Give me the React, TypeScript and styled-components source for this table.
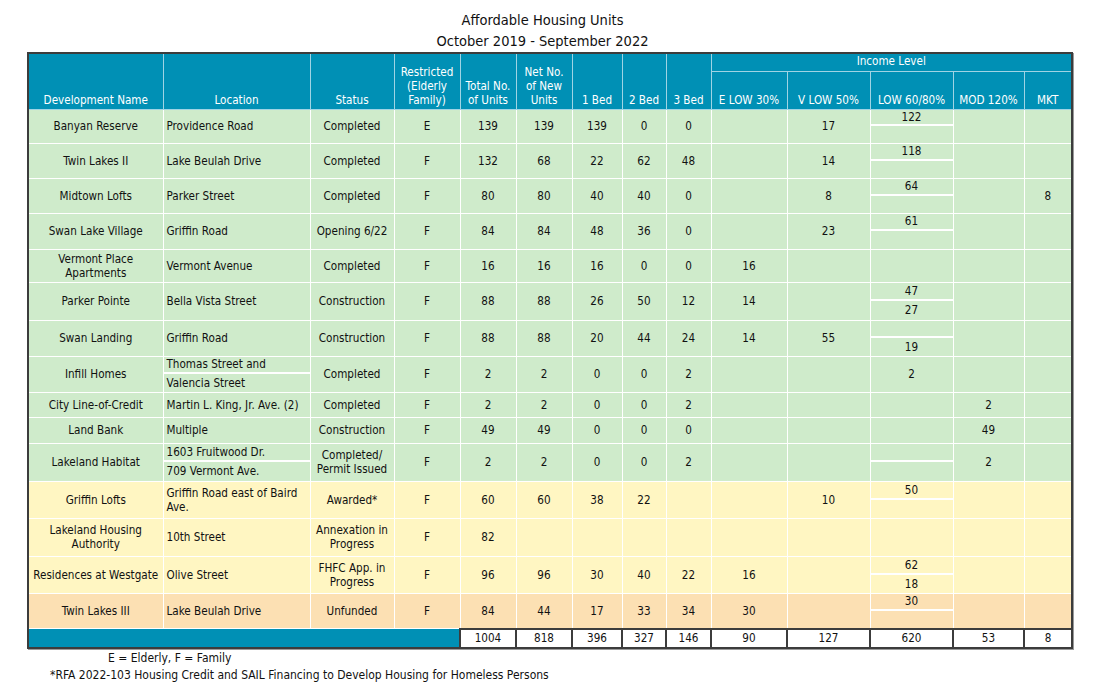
import React from 'react';
import styled, { createGlobalStyle } from 'styled-components';

type Tone = 'green' | 'yellow' | 'orange';

const tones: Record<Tone, string> = {
  green: '#cfebcb',
  yellow: '#fff6c2',
  orange: '#fce0b3',
};

const GlobalStyle = createGlobalStyle`
  body {
    margin: 0;
    background: #fff;
    font-family: "DejaVu Sans Condensed", "DejaVu Sans", sans-serif;
    font-stretch: condensed;
    color: #111;
  }
`;

const Page = styled.div`
  width: 1101px;
  height: 695px;
  padding-left: 27px;
  box-sizing: border-box;
`;

const Title = styled.div`
  width: 1045px;
  padding-top: 10px;
  text-align: center;
  font-size: 14.5px;
  line-height: 21px;
  padding-right: 14px;
  box-sizing: border-box;
`;

const Table = styled.table`
  border-collapse: collapse;
  table-layout: fixed;
  width: 1044px;
  border: 2px solid #3c3c3c;
  box-shadow: 1px 1px 0 #9a9a9a;
  font-size: 11.6px;
`;

const Th = styled.th<{ $top?: boolean }>`
  background: #0090b5;
  color: #fff;
  font-weight: normal;
  text-align: center;
  vertical-align: ${p => (p.$top ? 'middle' : 'bottom')};
  border: 1px solid #9fd4e4;
  line-height: 14px;
  padding: 0 2px 2px;
  white-space: nowrap;
`;

const Row = styled.tr<{ $tone: Tone; $h: number }>`
  background: ${p => tones[p.$tone]};
  height: ${p => p.$h}px;
`;

const Td = styled.td<{ $left?: boolean }>`
  border: 1px solid #fff;
  text-align: ${p => (p.$left ? 'left' : 'center')};
  vertical-align: middle;
  line-height: 14px;
  padding: ${p => (p.$left ? '0 2px 0 3px' : '0 2px')};
  white-space: nowrap;
`;

const SplitTd = styled.td`
  border: 1px solid #fff;
  padding: 0;
  vertical-align: top;
`;

const Split = styled.div<{ $h: number }>`
  display: grid;
  grid-template-rows: 1fr 1fr;
  height: ${p => p.$h}px;
`;

const Half = styled.div<{ $left?: boolean; $first?: boolean }>`
  display: flex;
  align-items: center;
  justify-content: ${p => (p.$left ? 'flex-start' : 'center')};
  padding-left: ${p => (p.$left ? '3px' : '0')};
  border-bottom: ${p => (p.$first ? '2px solid #fff' : 'none')};
  line-height: 14px;
  white-space: nowrap;
`;

const TotalBar = styled.td`
  background: #0090b5;
  border: 1px solid #0090b5;
  border-bottom: 2px solid #3c3c3c;
`;

const TotalCell = styled.td`
  background: #fff;
  border: 2px solid #3c3c3c;
  text-align: center;
  line-height: 14px;
  padding: 0;
`;

const Notes = styled.div`
  font-size: 12px;
  line-height: 17px;
  padding-top: 1px;
`;

const Note = styled.div<{ $indent: number }>`
  padding-left: ${p => p.$indent}px;
`;

const widths = [135, 147, 84, 66, 56, 56, 50, 44, 45, 76, 83, 83, 71, 48];

type Unit = {
  name: React.ReactNode;
  loc: React.ReactNode;
  locSplit?: [string, string];
  status: React.ReactNode;
  r: string;
  nums: string[];
  el?: string;
  vl?: string;
  low?: string | [string, string];
  mod?: string;
  mkt?: string;
  tone: Tone;
  h: number;
};

const units: Unit[] = [
  { name: 'Banyan Reserve', loc: 'Providence Road', status: 'Completed', r: 'E', nums: ['139', '139', '139', '0', '0'], vl: '17', low: ['122', ''], tone: 'green', h: 34 },
  { name: 'Twin Lakes II', loc: 'Lake Beulah Drive', status: 'Completed', r: 'F', nums: ['132', '68', '22', '62', '48'], vl: '14', low: ['118', ''], tone: 'green', h: 35 },
  { name: 'Midtown Lofts', loc: 'Parker Street', status: 'Completed', r: 'F', nums: ['80', '80', '40', '40', '0'], vl: '8', low: ['64', ''], mkt: '8', tone: 'green', h: 35 },
  { name: 'Swan Lake Village', loc: 'Griffin Road', status: 'Opening 6/22', r: 'F', nums: ['84', '84', '48', '36', '0'], vl: '23', low: ['61', ''], tone: 'green', h: 36 },
  { name: <>Vermont Place<br />Apartments</>, loc: 'Vermont Avenue', status: 'Completed', r: 'F', nums: ['16', '16', '16', '0', '0'], el: '16', tone: 'green', h: 33 },
  { name: 'Parker Pointe', loc: 'Bella Vista Street', status: 'Construction', r: 'F', nums: ['88', '88', '26', '50', '12'], el: '14', low: ['47', '27'], tone: 'green', h: 38 },
  { name: 'Swan Landing', loc: 'Griffin Road', status: 'Construction', r: 'F', nums: ['88', '88', '20', '44', '24'], el: '14', vl: '55', low: ['', '19'], tone: 'green', h: 36 },
  { name: 'Infill Homes', loc: '', locSplit: ['Thomas Street and', 'Valencia Street'], status: 'Completed', r: 'F', nums: ['2', '2', '0', '0', '2'], low: '2', tone: 'green', h: 36 },
  { name: 'City Line-of-Credit', loc: 'Martin L. King, Jr. Ave. (2)', status: 'Completed', r: 'F', nums: ['2', '2', '0', '0', '2'], mod: '2', tone: 'green', h: 25 },
  { name: 'Land Bank', loc: 'Multiple', status: 'Construction', r: 'F', nums: ['49', '49', '0', '0', '0'], mod: '49', tone: 'green', h: 26 },
  { name: 'Lakeland Habitat', loc: '', locSplit: ['1603 Fruitwood Dr.', '709 Vermont Ave.'], status: <>Completed/<br />Permit Issued</>, r: 'F', nums: ['2', '2', '0', '0', '2'], low: ['', ''], mod: '2', tone: 'green', h: 38 },
  { name: 'Griffin Lofts', loc: <>Griffin Road east of Baird<br />Ave.</>, status: 'Awarded*', r: 'F', nums: ['60', '60', '38', '22', ''], vl: '10', low: ['50', ''], tone: 'yellow', h: 37 },
  { name: <>Lakeland Housing<br />Authority</>, loc: '10th Street', status: <>Annexation in<br />Progress</>, r: 'F', nums: ['82', '', '', '', ''], tone: 'yellow', h: 38 },
  { name: 'Residences at Westgate', loc: 'Olive Street', status: <>FHFC App. in<br />Progress</>, r: 'F', nums: ['96', '96', '30', '40', '22'], el: '16', low: ['62', '18'], tone: 'yellow', h: 37 },
  { name: 'Twin Lakes III', loc: 'Lake Beulah Drive', status: 'Unfunded', r: 'F', nums: ['84', '44', '17', '33', '34'], el: '30', low: ['30', ''], tone: 'orange', h: 35 },
];

const totals = ['1004', '818', '396', '327', '146', '90', '127', '620', '53', '8'];

const SplitCell = ({ parts, h, left }: { parts: [string, string]; h: number; left?: boolean }) => (
  <SplitTd>
    <Split $h={h - 1}>
      <Half $left={left} $first>{parts[0]}</Half>
      <Half $left={left}>{parts[1]}</Half>
    </Split>
  </SplitTd>
);

const App = () => (
  <Page>
    <GlobalStyle />
    <Title>
      <div>Affordable Housing Units</div>
      <div>October 2019 - September 2022</div>
    </Title>
    <Table>
      <colgroup>
        {widths.map((w, i) => (
          <col key={i} style={{ width: w }} />
        ))}
      </colgroup>
      <thead>
        <tr style={{ height: 18 }}>
          <Th rowSpan={2}>Development Name</Th>
          <Th rowSpan={2}>Location</Th>
          <Th rowSpan={2}>Status</Th>
          <Th rowSpan={2}>
            Restricted
            <br />
            (Elderly
            <br />
            Family)
          </Th>
          <Th rowSpan={2}>
            Total No.
            <br />
            of Units
          </Th>
          <Th rowSpan={2}>
            Net No.
            <br />
            of New
            <br />
            Units
          </Th>
          <Th rowSpan={2}>1 Bed</Th>
          <Th rowSpan={2}>2 Bed</Th>
          <Th rowSpan={2}>3 Bed</Th>
          <Th colSpan={5} $top>
            Income Level
          </Th>
        </tr>
        <tr style={{ height: 38 }}>
          <Th>E LOW 30%</Th>
          <Th>V LOW 50%</Th>
          <Th>LOW 60/80%</Th>
          <Th>MOD 120%</Th>
          <Th>MKT</Th>
        </tr>
      </thead>
      <tbody>
        {units.map((u, i) => (
          <Row key={i} $tone={u.tone} $h={u.h}>
            <Td>{u.name}</Td>
            {u.locSplit ? <SplitCell parts={u.locSplit} h={u.h} left /> : <Td $left>{u.loc}</Td>}
            <Td>{u.status}</Td>
            <Td>{u.r}</Td>
            {u.nums.map((n, j) => (
              <Td key={j}>{n}</Td>
            ))}
            <Td>{u.el}</Td>
            <Td>{u.vl}</Td>
            {Array.isArray(u.low) ? <SplitCell parts={u.low} h={u.h} /> : <Td>{u.low}</Td>}
            <Td>{u.mod}</Td>
            <Td>{u.mkt}</Td>
          </Row>
        ))}
        <tr style={{ height: 19 }}>
          <TotalBar colSpan={4} />
          {totals.map((t, i) => (
            <TotalCell key={i}>{t}</TotalCell>
          ))}
        </tr>
      </tbody>
    </Table>
    <Notes>
      <Note $indent={81}>E = Elderly, F = Family</Note>
      <Note $indent={23}>*RFA 2022-103 Housing Credit and SAIL Financing to Develop Housing for Homeless Persons</Note>
    </Notes>
  </Page>
);

export default App;
